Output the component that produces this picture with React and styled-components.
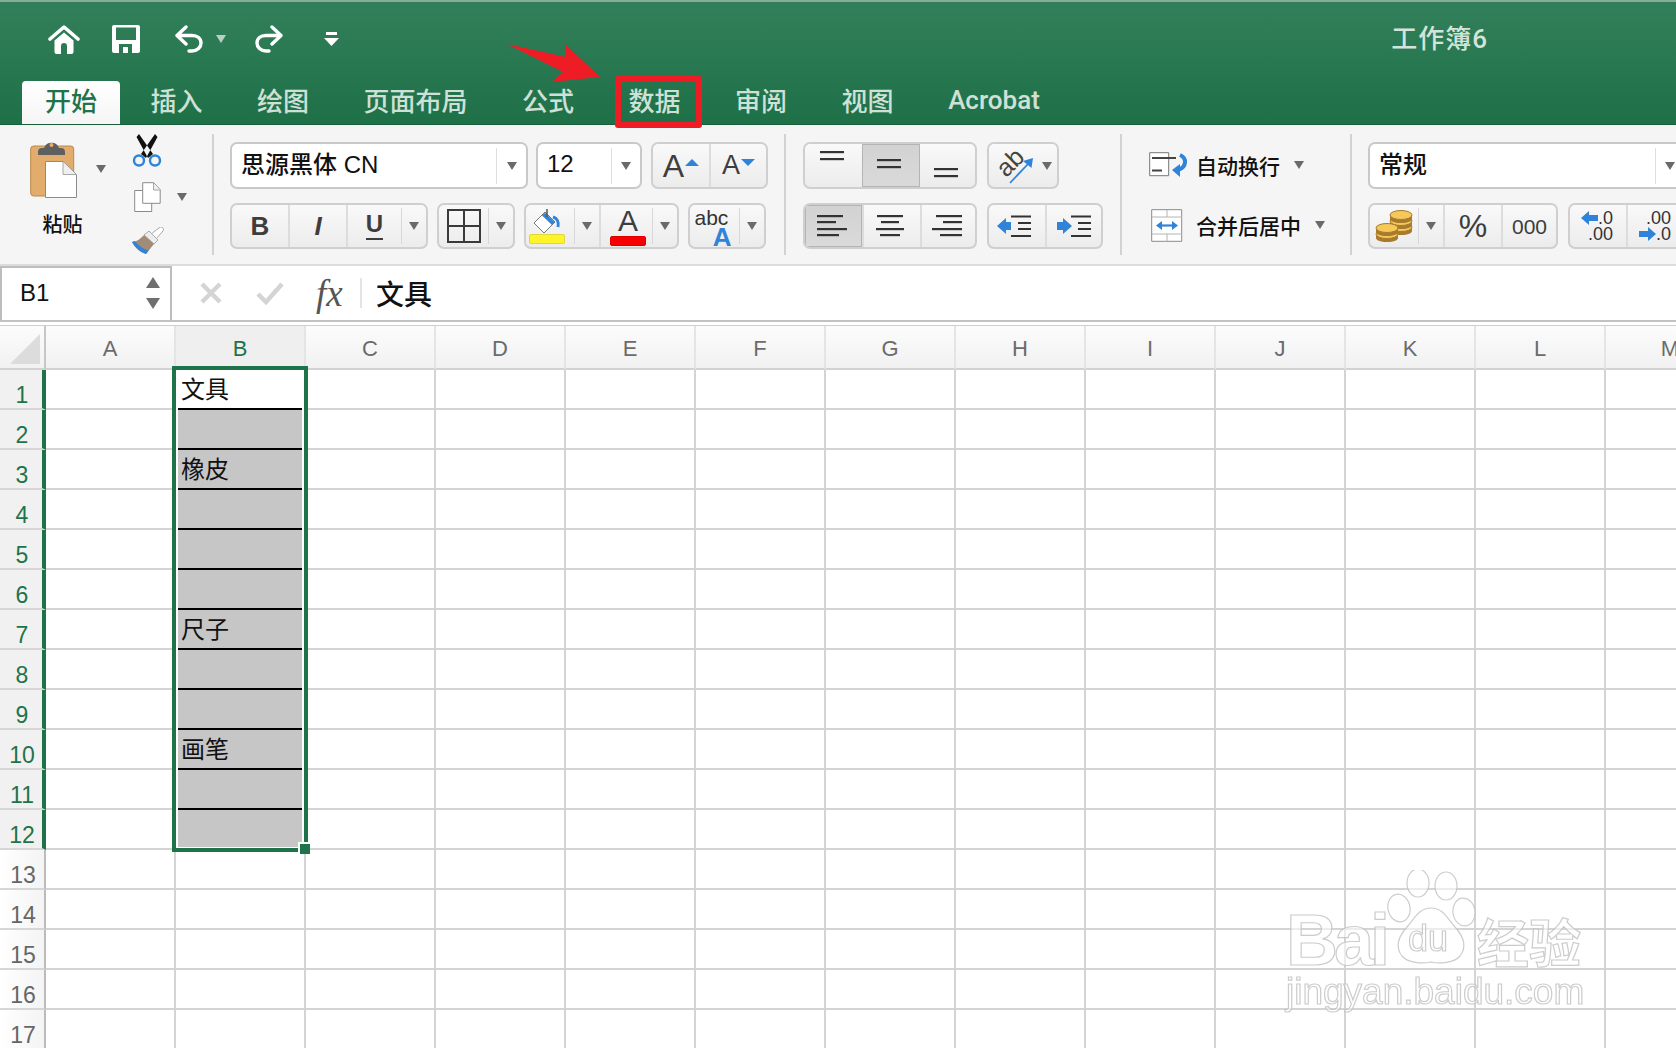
import styled, { createGlobalStyle } from "styled-components";

const SANS = `"Liberation Sans", "Noto Sans CJK SC", sans-serif`;
const UI = `Roboto, "Noto Sans CJK SC", sans-serif`;
const GREEN = "#1f7349";
const BLUE = "#2f83d9";

const GlobalStyle = createGlobalStyle`
  html, body {
    margin: 0;
    height: 100%;
    overflow: hidden;
    background: #fff;
    font-family: ${UI};
    font-weight: 500;
  }
`;

const Page = styled.div`
  position: relative;
  width: 1676px;
  height: 1048px;
  overflow: hidden;
  display: flex;
  flex-direction: column;
`;

// title bar

const TitleBar = styled.div`
  height: 125px;
  box-sizing: border-box;
  flex: none;
  display: flex;
  flex-direction: column;
  border-top: 2px solid #86ad98;
  border-bottom: 1px solid #1a5f3c;
  background: linear-gradient(#32805b, #1e7047);
`;

const QuickBar = styled.div`
  height: 80px;
  box-sizing: border-box;
  padding: 0 188px 6px 48px;
  display: flex;
  align-items: center;
`;

const QuickIcon = styled.svg`
  flex: none;
  display: block;
  margin-left: ${(p) => p.$gap || 0}px;
  transform: ${(p) => (p.$flip ? "scaleX(-1)" : "none")};
`;

const QuickCaret = styled.span`
  flex: none;
  width: 0;
  height: 0;
  margin-left: 12px;
  border-left: 5.5px solid transparent;
  border-right: 5.5px solid transparent;
  border-top: 8px solid #b9d1c3;
`;

const DocTitle = styled.div`
  margin: -6px 0 0 auto;
  font-size: 26px;
  letter-spacing: 1px;
  color: #d3e4da;
  white-space: nowrap;
`;

const TabRow = styled.div`
  height: 42px;
  padding-left: 22px;
  display: flex;
  align-items: flex-end;
  gap: 0.5px;
`;

const Tab = styled.div`
  height: 43px;
  box-sizing: border-box;
  padding: 0 ${(p) => (p.$active ? 23 : 27)}px 6px;
  margin-right: ${(p) => (p.$active ? 3 : 0)}px;
  display: flex;
  align-items: center;
  font-size: 26px;
  white-space: nowrap;
  color: ${(p) => (p.$active ? GREEN : "#cfe1d7")};
  background: ${(p) => (p.$active ? "linear-gradient(#fff, #f5f5f5)" : "transparent")};
  border-radius: 4px 4px 0 0;
`;

// ribbon

const Ribbon = styled.div`
  height: 141px;
  box-sizing: border-box;
  flex: none;
  padding: 9px 0;
  display: flex;
  background: #f5f5f5;
  border-bottom: 2px solid #dcdcdc;
`;

const Section = styled.div`
  width: ${(p) => p.$w}px;
  flex: none;
  box-sizing: border-box;
  padding: ${(p) => (p.$rows ? "8px 0 0 " : "0 0 0 ")}${(p) => p.$pad || 0}px;
  border-right: ${(p) => (p.$last ? "none" : "2px solid #d2d2d2")};
  display: flex;
  flex-direction: ${(p) => (p.$rows ? "column" : "row")};
  gap: ${(p) => (p.$rows ? 14 : 0)}px;
`;

const PasteCol = styled.div`
  width: 77px;
  padding-top: 6px;
  flex: none;
`;

const PasteTop = styled.div`
  display: flex;
  align-items: center;
  gap: 19px;
`;

const PasteLabel = styled.div`
  width: 65px;
  margin-top: 15px;
  text-align: center;
  font-size: 20px;
  line-height: 24px;
  color: #111;
`;

const ToolCol = styled.div`
  margin-left: 24px;
  display: flex;
  flex-direction: column;
  gap: 15px;
`;

const ToolRow = styled.div`
  display: flex;
  align-items: center;
  gap: 16px;
  padding-left: ${(p) => p.$indent || 0}px;
`;

const Row = styled.div`
  display: flex;
  gap: ${(p) => p.$gap || 9}px;
  height: ${(p) => p.$h || 46}px;
`;

const Caret = styled.span`
  flex: none;
  width: 0;
  height: 0;
  border-left: 5.5px solid transparent;
  border-right: 5.5px solid transparent;
  border-top: 8px solid #6a6a6a;
`;

const Combo = styled.div`
  width: ${(p) => p.$w}px;
  flex: none;
  box-sizing: border-box;
  display: flex;
  align-items: center;
  margin-left: ${(p) => p.$nudge || 0}px;
  background: #fff;
  border: 2px solid #c9c9c9;
  border-radius: 7px;
  font-family: ${SANS};
  font-size: 24px;
  color: #111;
`;

const ComboText = styled.span`
  flex: 1;
  padding-left: 9px;
  padding-bottom: ${(p) => p.$lift}px;
  white-space: nowrap;
`;

const ComboArrow = styled.div`
  width: ${(p) => p.$w}px;
  height: 36px;
  flex: none;
  display: flex;
  align-items: center;
  justify-content: center;
  border-left: 1px solid #dedede;
`;

const BtnGroup = styled.div`
  width: ${(p) => p.$w}px;
  flex: none;
  box-sizing: border-box;
  display: flex;
  overflow: hidden;
  margin-left: ${(p) => p.$nudge || 0}px;
  border: 2px solid #cfcfcf;
  border-radius: 7px;
  background: linear-gradient(#f9f9f9, #ececec);
`;

const Seg = styled.div`
  width: ${(p) => p.$w}px;
  flex: ${(p) => (p.$w ? "none" : 1)};
  box-sizing: border-box;
  padding: 0 ${(p) => p.$pr || 0}px 0 ${(p) => p.$pl || 0}px;
  display: flex;
  flex-direction: ${(p) => (p.$col ? "column" : "row")};
  align-items: center;
  justify-content: center;
  gap: ${(p) => p.$gap || 0}px;
  color: #3d3d3d;
  background: ${(p) => (p.$active ? "linear-gradient(#d2d2d2, #dadada)" : "transparent")};
  box-shadow: ${(p) => (p.$active ? "inset 0 0 0 1px #b4b4b4" : "none")};
  border-left: ${(p) => (p.$divided ? "2px solid #dcdcdc" : "none")};
`;

const SplitArrow = styled.div`
  width: ${(p) => p.$w || 24}px;
  flex: none;
  align-self: center;
  height: 36px;
  display: flex;
  align-items: center;
  justify-content: center;
  border-left: ${(p) => (p.$plain ? "none" : "1px solid #d8d8d8")};
`;

const Letter = styled.span`
  font-family: ${SANS};
  font-size: ${(p) => p.$size || 26}px;
  font-weight: ${(p) => (p.$bold ? 700 : 400)};
  font-style: ${(p) => (p.$italic ? "italic" : "normal")};
  color: #3d3d3d;
  line-height: 1;
`;

const UnderLetter = styled(Letter)`
  border-bottom: 2px solid #3d3d3d;
  padding-bottom: 2px;
`;

const Triangle = styled.span`
  width: 0;
  height: 0;
  margin-top: -6px;
  border-left: 7px solid transparent;
  border-right: 7px solid transparent;
  border-${(p) => (p.$down ? "top" : "bottom")}: 7px solid ${BLUE};
`;

const ColorBar = styled.span`
  width: 36px;
  height: 10px;
  border-radius: 2px;
  background: ${(p) => p.$color};
  border: 1px solid ${(p) => p.$edge};
  box-sizing: border-box;
`;

const AbcStack = styled.div`
  width: 40px;
  display: flex;
  flex-direction: column;
  padding-top: 2px;
`;

const AbcTop = styled.span`
  font-family: ${SANS};
  font-size: 21px;
  line-height: 20px;
  color: #333;
`;

const AbcA = styled.span`
  align-self: flex-end;
  margin-right: 3px;
  margin-top: -1px;
  font-family: ${SANS};
  font-size: 26px;
  font-weight: 700;
  line-height: 20px;
  color: ${BLUE};
`;

const WrapAction = styled.div`
  height: ${(p) => p.$h}px;
  box-sizing: border-box;
  padding: 0 0 2px ${(p) => p.$pad}px;
  display: flex;
  align-items: center;
  font-size: 21px;
  color: #111;
`;

const ActionText = styled.span`
  margin: 0 ${(p) => p.$after}px 0 ${(p) => p.$before}px;
  white-space: nowrap;
`;

const DecimalLine = styled.div`
  display: flex;
  align-items: center;
  justify-content: flex-end;
  width: 100%;
  padding-right: ${(p) => p.$pad || 0}px;
  box-sizing: border-box;
  font-family: ${SANS};
  font-size: 18px;
  line-height: 16px;
  color: #333;
`;

// formula bar

const FormulaBar = styled.div`
  height: 56px;
  flex: none;
  box-sizing: border-box;
  display: flex;
  background: #fff;
  border-bottom: 2px solid #c2c2c2;
`;

const NameBox = styled.div`
  width: 172px;
  flex: none;
  box-sizing: border-box;
  padding: 0 0 2px 18px;
  display: flex;
  align-items: center;
  justify-content: space-between;
  border: 2px solid #bdbdbd;
  border-bottom: none;
  font-family: ${SANS};
  font-size: 24px;
  color: #111;
`;

const Spinner = styled.div`
  display: flex;
  flex-direction: column;
  gap: 10px;
  margin-right: 10px;
`;

const SpinArrow = styled.span`
  width: 0;
  height: 0;
  border-left: 7px solid transparent;
  border-right: 7px solid transparent;
  border-${(p) => (p.$down ? "top" : "bottom")}: 11px solid #6f6f6f;
`;

const FormulaTools = styled.div`
  display: flex;
  align-items: center;
  padding-left: 27px;
`;

const ToolGap = styled.span`
  width: 32px;
`;

const FxMark = styled.span`
  margin-left: 31px;
  width: 44px;
  font-family: "Liberation Serif", serif;
  font-style: italic;
  font-size: 37px;
  color: #555;
`;

const FxDivider = styled.span`
  width: 2px;
  height: 30px;
  margin-right: 14px;
  background: #e4e4e4;
`;

const FormulaText = styled.div`
  font-size: 28px;
  color: #111;
`;

// sheet

const SheetWrap = styled.div`
  position: relative;
  flex: 1;
  overflow: hidden;
  background: #fff;
  padding-top: 3px;
`;

const Sheet = styled.div`
  display: grid;
  grid-template-columns: 46px repeat(13, 130px);
  grid-template-rows: 44px repeat(17, 40px);
  border-top: 1px solid #cfcfcf;
`;

const Corner = styled.div`
  position: relative;
  border-right: 2px solid #c6c6c6;
  border-bottom: 2px solid #d2d2d2;
  background: linear-gradient(#fcfcfc, #f1f1f1);
  &::after {
    content: "";
    position: absolute;
    right: 4px;
    bottom: 4px;
    width: 30px;
    height: 30px;
    background: #dcdcdc;
    clip-path: polygon(100% 0, 100% 100%, 0 100%);
  }
`;

const ColHead = styled.div`
  display: flex;
  align-items: center;
  justify-content: center;
  padding-top: 4px;
  font-family: ${SANS};
  font-weight: 400;
  font-size: 22px;
  color: ${(p) => (p.$active ? GREEN : "#6b6b6b")};
  background: ${(p) => (p.$active ? "#efefef" : "linear-gradient(#fcfcfc, #f1f1f1)")};
  border-right: 2px solid #e4e4e4;
  border-bottom: 2px solid #d2d2d2;
`;

const RowHead = styled.div`
  box-sizing: border-box;
  padding: 13px 0 0 2px;
  text-align: center;
  font-family: ${SANS};
  font-weight: 400;
  font-size: 23px;
  line-height: 24px;
  color: ${(p) => (p.$active ? GREEN : "#666")};
  background: ${(p) => (p.$active ? "#f1f1f1" : "linear-gradient(90deg, #fff, #f4f4f4)")};
  border-right: ${(p) => (p.$active ? `4px solid ${GREEN}` : "2px solid #bbb")};
  border-bottom: 2px solid #d6d6d6;
`;

const Cell = styled.div`
  box-sizing: border-box;
  border-right: 2px solid #d4d4d4;
  border-bottom: 2px solid #d4d4d4;
`;

const SelCell = styled.div`
  box-sizing: border-box;
  padding: 0 4px ${(p) => (p.$last ? 3 : 0)}px 2px;
  display: flex;
`;

const SelFill = styled.div`
  flex: 1;
  box-sizing: border-box;
  padding: 0 0 3px 3px;
  display: flex;
  align-items: center;
  font-size: 24px;
  font-weight: 400;
  color: #111;
  background: ${(p) => (p.$first ? "#fff" : "#c6c6c6")};
  border-bottom: ${(p) => (p.$last ? "none" : "2px solid #000")};
`;

const Selection = styled.div`
  position: absolute;
  left: 172px;
  top: 44px;
  width: 136px;
  height: 486px;
  box-sizing: border-box;
  border: 4px solid ${GREEN};
  pointer-events: none;
`;

const Handle = styled.span`
  position: absolute;
  right: -6px;
  bottom: -6px;
  width: 10px;
  height: 10px;
  background: ${GREEN};
  box-shadow: -2px -2px 0 #fff;
`;

// overlays

const RedBox = styled.div`
  position: absolute;
  left: 615px;
  top: 76px;
  width: 87px;
  height: 52px;
  box-sizing: border-box;
  border: 6px solid #ee1c25;
  border-radius: 3px;
`;

const RedArrow = styled.svg`
  position: absolute;
  left: 505px;
  top: 40px;
`;

const Watermark = styled.div`
  position: absolute;
  left: 1286px;
  top: 870px;
  width: 300px;
  filter: blur(0.4px);
  opacity: 0.85;
`;

const MarkTop = styled.div`
  display: flex;
  align-items: flex-end;
  height: 96px;
`;

const outlined = `
  color: rgba(255, 255, 255, 0.65);
  -webkit-text-stroke: 1.2px #c4c4c4;
  white-space: nowrap;
`;

const MarkBrand = styled.span`
  ${outlined}
  font-family: ${SANS};
  font-weight: 700;
  font-size: 72px;
  letter-spacing: -4px;
  line-height: 60px;
  height: 56px;
`;

const MarkPaw = styled.svg`
  flex: none;
`;

const MarkCjk = styled.span`
  ${outlined}
  margin-left: 1px;
  font-weight: 700;
  font-size: 52px;
  line-height: 60px;
  height: 50px;
`;

const MarkSite = styled.div`
  ${outlined}
  margin-top: 5px;
  font-family: ${SANS};
  font-weight: 400;
  font-size: 37px;
  line-height: 42px;
`;

function HomeIcon() {
  return (
    <QuickIcon width="32" height="30" viewBox="0 0 32 30">
      <path d="M2 15 16 3l14 12" fill="none" stroke="#fff" strokeWidth="3.6" strokeLinecap="round" strokeLinejoin="round" />
      <path d="M6.500 16.500 16 8.500l9.500 8V28a2 2 0 0 1-2 2H19V22a3 3 0 0 0-6 0v8H8.500a2 2 0 0 1-2-2z" fill="#fff" />
    </QuickIcon>
  );
}

function SaveIcon() {
  return (
    <QuickIcon $gap={32} width="28" height="28" viewBox="0 0 28 28">
      <path
        fillRule="evenodd"
        d="M2 0h24a2 2 0 0 1 2 2v24a2 2 0 0 1-2 2H2a2 2 0 0 1-2-2V2a2 2 0 0 1 2-2zM4 2.500V15h20V2.500zM7 19v9h13v-9zM11 22h5v6h-5z"
        fill="#fff"
      />
    </QuickIcon>
  );
}

function UndoIcon({ flip, gap }) {
  return (
    <QuickIcon $gap={gap} $flip={flip} width="30" height="28" viewBox="0 0 30 28">
      <path
        d="M12 2 3 10.500l9 8.500M3 10.500h15c5.500 0 9 3.200 9 7.500s-3.500 8-9 8h-3"
        fill="none"
        stroke="#fff"
        strokeWidth="3.4"
        strokeLinecap="round"
        strokeLinejoin="round"
      />
    </QuickIcon>
  );
}

function CustomizeIcon() {
  return (
    <QuickIcon $gap={40} width="15" height="14" viewBox="0 0 15 14">
      <rect x="2" y="0" width="11" height="3" fill="#fff" />
      <path d="M0 6h15l-7.500 8z" fill="#fff" />
    </QuickIcon>
  );
}

function PasteIcon() {
  return (
    <svg width="47" height="58" viewBox="0 0 47 58">
      <rect x="0.700" y="6" width="43" height="50" rx="3" fill="#e2ad6c" stroke="#b98a4a" />
      <path d="M8 15v-3a4 4 0 0 1 4-4h2a8 8 0 0 1 15 0h2a4 4 0 0 1 4 4v3z" fill="#5f5f5f" />
      <circle cx="21.500" cy="5" r="2" fill="#e2ad6c" />
      <path d="M15.500 21.500H33l13.500 13V57.500h-31z" fill="#fff" stroke="#8c8c8c" />
      <path d="M33 22v12.500h13" fill="#efefef" stroke="#a8a8a8" />
    </svg>
  );
}

function ScissorsIcon() {
  return (
    <svg width="30" height="33" viewBox="0 0 30 33">
      <path d="M7 0 21 20l-5 4L4.500 3zM23 0 9 20l5 4L25.500 3z" fill="#111" />
      <circle cx="7" cy="26.500" r="5" fill="none" stroke={BLUE} strokeWidth="2.400" />
      <circle cx="23" cy="26.500" r="5" fill="none" stroke={BLUE} strokeWidth="2.400" />
    </svg>
  );
}

function CopyIcon() {
  return (
    <svg width="27" height="30" viewBox="0 0 27 30">
      <path d="M.7 8.500h17v21H.7z" fill="#fff" stroke="#8a8a8a" />
      <path d="M8.700.7h11l6.500 7v13.600H8.700z" fill="#fff" stroke="#8a8a8a" />
      <path d="M19.500 1v7h6.500" fill="#efefef" stroke="#a8a8a8" />
    </svg>
  );
}

function BrushIcon() {
  return (
    <svg width="33" height="28" viewBox="0 0 33 28">
      <path d="M20 7 28 1a2.500 2.500 0 0 1 4 3l-7 8z" fill="#fff" stroke="#aaa" />
      <path d="M13 8 18 4l9 9-4 4z" fill="#ededed" stroke="#aaa" />
      <path d="M1 15c5 0 9-4 12-7l10 9c-3 3-5 7-8 10-6-2-11-6-14-12z" fill="#a08c78" />
      <path d="M1 15c3 5 8 10 14 12l2.500-3.500C12 22 7 18 3.800 14z" fill={BLUE} />
    </svg>
  );
}

function BorderIcon() {
  return (
    <svg width="34" height="34" viewBox="0 0 34 34">
      <path d="M1 1h32v32H1zM17 1v32M1 17h32" fill="none" stroke="#3a3a3a" strokeWidth="2" />
    </svg>
  );
}

function FillIcon() {
  return (
    <svg width="28" height="26" viewBox="0 0 28 26">
      <path d="M12 4 22 14 11 25 1 15z" fill="#fff" stroke="#777" />
      <path d="M9 7.500 19 17l2.500-3L12 4.700z" fill={BLUE} />
      <path d="M14 1v8" stroke="#555" strokeWidth="1.500" />
      <path d="M20 9c4 1 6 5 5 10" fill="none" stroke={BLUE} strokeWidth="3" />
    </svg>
  );
}

// horizontal strokes of the alignment buttons
function LinesIcon({ w, h, lines }) {
  return (
    <svg width={w} height={h} viewBox={`0 0 ${w} ${h}`}>
      {lines.map(([x, y, len], i) => (
        <rect key={i} x={x} y={y} width={len} height="2.200" fill="#333" />
      ))}
    </svg>
  );
}

function OrientIcon() {
  return (
    <svg width="38" height="38" viewBox="0 0 38 38">
      <text x="0" y="25" transform="rotate(-45 12 17)" fontFamily="Liberation Sans" fontSize="25" fill="#444">
        ab
      </text>
      <path d="M13 36 31 17" fill="none" stroke={BLUE} strokeWidth="1.800" />
      <path d="M36 11 34.500 21 26 14z" fill={BLUE} />
    </svg>
  );
}

function IndentIcon({ right }) {
  return (
    <svg width="34" height="24" viewBox="0 0 34 24">
      <path d={right ? "M0 8h6V4l9 8-9 8v-4H0z" : "M14 8H9V4l-9 8 9 8v-4h5z"} fill={BLUE} />
      <path d="M14 2.500h20M21 9h13M21 15h13M14 22h20" stroke="#333" strokeWidth="2.200" />
    </svg>
  );
}

function CoinStack({ x, y, n }) {
  const coins = Array.from({ length: n }, (_, i) => i);
  return coins.reverse().map((i) => (
    <g key={i} transform={`translate(${x} ${y + i * 6})`}>
      <path d="M0 4v4c0 2 4 4 11 4s11-2 11-4V4z" fill="#a87a2d" />
      <ellipse cx="11" cy="4" rx="11" ry="4.500" fill="#f4c95a" stroke="#a87a2d" />
    </g>
  ));
}

function CoinsIcon() {
  return (
    <svg width="38" height="32" viewBox="0 0 38 32">
      <CoinStack x={15} y={1} n={3} />
      <CoinStack x={1} y={14} n={2} />
    </svg>
  );
}

function WrapIcon() {
  return (
    <svg width="40" height="28" viewBox="0 0 40 28">
      <path d="M.7 1.700h19v23h-19z" fill="#fff" stroke="#777" />
      <path d="M3 7h24M3 19.500h10" stroke="#444" strokeWidth="1.800" />
      <path d="M31 4c7 3 7 12-2 15" fill="none" stroke={BLUE} strokeWidth="4" />
      <path d="M23 19l8-6v13z" fill={BLUE} />
    </svg>
  );
}

function MergeIcon() {
  return (
    <svg width="32" height="33" viewBox="0 0 32 33">
      <path d="M.7.7h30v31.600H.7z" fill="#fff" stroke="#8a8a8a" />
      <path d="M1 8h30M1 25h30M16 1v7M16 25v7" stroke="#b4b4b4" />
      <path d="M9 16.500h14" stroke={BLUE} strokeWidth="2.200" />
      <path d="M5 16.500 11 12v9zM27 16.500 21 12v9z" fill={BLUE} />
    </svg>
  );
}

function CrossIcon() {
  return (
    <svg width="24" height="24" viewBox="0 0 24 24">
      <path d="M3 3l18 18M21 3 3 21" stroke="#d4d4d4" strokeWidth="4.500" />
    </svg>
  );
}

function CheckIcon() {
  return (
    <svg width="30" height="24" viewBox="0 0 30 24">
      <path d="M3 13l8 8L27 3" fill="none" stroke="#d4d4d4" strokeWidth="4.500" />
    </svg>
  );
}

function DecArrow({ right }) {
  return (
    <svg width="17" height="14" viewBox="0 0 17 14">
      <path d={right ? "M0 4h9V0l8 7-8 7v-4H0z" : "M17 4H8V0L0 7l8 7v-4h9z"} fill={BLUE} />
    </svg>
  );
}

function PawMark() {
  const line = { fill: "rgba(255,255,255,.65)", stroke: "#c4c4c4", strokeWidth: 1.2 };
  return (
    <MarkPaw width="90" height="96" viewBox="0 0 90 96">
      <ellipse cx="32" cy="13" rx="11" ry="14" {...line} />
      <ellipse cx="60" cy="16" rx="11" ry="14" {...line} />
      <ellipse cx="13" cy="38" rx="11" ry="14" transform="rotate(-12 13 38)" {...line} />
      <ellipse cx="78" cy="42" rx="11" ry="14" transform="rotate(-8 78 42)" {...line} />
      <path d="M45 38c12 0 16 10 24 19 9 10 12 20 5 29-6 7-20 8-29 6-9 2-23 1-29-6-7-9-4-19 5-29 8-9 12-19 24-19z" {...line} />
      <text x="22" y="81" fontFamily="Liberation Sans" fontSize="36" fontWeight="400" {...line}>
        du
      </text>
    </MarkPaw>
  );
}

const COLS = "ABCDEFGHIJKLM".split("");
const ROWS = Array.from({ length: 17 }, (_, i) => i + 1);
const CELL_VALUES = { 1: "文具", 3: "橡皮", 7: "尺子", 10: "画笔" };
const TABS = ["开始", "插入", "绘图", "页面布局", "公式", "数据", "审阅", "视图", "Acrobat"];

function SheetRow({ row }) {
  const selected = row <= 12;
  return (
    <>
      <RowHead $active={selected}>{row}</RowHead>
      {COLS.map((col) =>
        col === "B" && selected ? (
          <SelCell key={col} $last={row === 12}>
            <SelFill $first={row === 1} $last={row === 12}>
              {CELL_VALUES[row]}
            </SelFill>
          </SelCell>
        ) : (
          <Cell key={col} />
        )
      )}
    </>
  );
}

function App() {
  return (
    <Page>
      <GlobalStyle />
      <TitleBar>
        <QuickBar>
          <HomeIcon />
          <SaveIcon />
          <UndoIcon gap={34} />
          <QuickCaret />
          <UndoIcon flip gap={28} />
          <CustomizeIcon />
          <DocTitle>工作簿6</DocTitle>
        </QuickBar>
        <TabRow>
          {TABS.map((tab, i) => (
            <Tab key={tab} $active={i === 0}>
              {tab}
            </Tab>
          ))}
        </TabRow>
      </TitleBar>

      <Ribbon>
        <Section $w={214} $pad={30}>
          <PasteCol>
            <PasteTop>
              <PasteIcon />
              <Caret />
            </PasteTop>
            <PasteLabel>粘贴</PasteLabel>
          </PasteCol>
          <ToolCol>
            <ToolRow $indent={1}>
              <ScissorsIcon />
            </ToolRow>
            <ToolRow $indent={3}>
              <CopyIcon />
              <Caret />
            </ToolRow>
            <ToolRow>
              <BrushIcon />
            </ToolRow>
          </ToolCol>
        </Section>

        <Section $w={572} $pad={16} $rows>
          <Row $h={47} $gap={8}>
            <Combo $w={298}>
              <ComboText $lift={6}>思源黑体 CN</ComboText>
              <ComboArrow $w={29}>
                <Caret />
              </ComboArrow>
            </Combo>
            <Combo $w={106}>
              <ComboText $lift={3}>12</ComboText>
              <ComboArrow $w={28}>
                <Caret />
              </ComboArrow>
            </Combo>
            <BtnGroup $w={117} $nudge={1}>
              <Seg $w={56} $gap={1}>
                <Letter $size={32}>A</Letter>
                <Triangle />
              </Seg>
              <Seg $divided $gap={1}>
                <Letter $size={27}>A</Letter>
                <Triangle $down />
              </Seg>
            </BtnGroup>
          </Row>
          <Row>
            <BtnGroup $w={198}>
              <Seg $w={56}>
                <Letter $bold>B</Letter>
              </Seg>
              <Seg $divided $w={58}>
                <Letter $bold $italic>
                  I
                </Letter>
              </Seg>
              <Seg $divided>
                <UnderLetter $bold $size={24}>
                  U
                </UnderLetter>
              </Seg>
              <SplitArrow>
                <Caret />
              </SplitArrow>
            </BtnGroup>
            <BtnGroup $w={78}>
              <Seg>
                <BorderIcon />
              </Seg>
              <SplitArrow>
                <Caret />
              </SplitArrow>
            </BtnGroup>
            <BtnGroup $w={155}>
              <Seg $w={48} $col $pr={6}>
                <FillIcon />
                <ColorBar $color="#fff32a" $edge="#e0d83a" />
              </Seg>
              <SplitArrow>
                <Caret />
              </SplitArrow>
              <Seg $col $divided $pl={3}>
                <Letter $size={30}>A</Letter>
                <ColorBar $color="#f80000" $edge="#e00000" />
              </Seg>
              <SplitArrow>
                <Caret />
              </SplitArrow>
            </BtnGroup>
            <BtnGroup $w={78}>
              <Seg>
                <AbcStack>
                  <AbcTop>abc</AbcTop>
                  <AbcA>A</AbcA>
                </AbcStack>
              </Seg>
              <SplitArrow>
                <Caret />
              </SplitArrow>
            </BtnGroup>
          </Row>
        </Section>

        <Section $w={336} $pad={17} $rows>
          <Row $h={47} $gap={10}>
            <BtnGroup $w={174}>
              <Seg $w={57} $pr={4}>
                <LinesIcon w={24} h={34} lines={[[0, 2, 24], [0, 9, 24]]} />
              </Seg>
              <Seg $w={58} $active $pr={4}>
                <LinesIcon w={24} h={34} lines={[[0, 10, 24], [0, 17, 24]]} />
              </Seg>
              <Seg $pr={4}>
                <LinesIcon w={24} h={34} lines={[[0, 19, 24], [0, 26, 24]]} />
              </Seg>
            </BtnGroup>
            <BtnGroup $w={72}>
              <Seg $pl={6}>
                <OrientIcon />
              </Seg>
              <SplitArrow $w={20} $plain>
                <Caret />
              </SplitArrow>
            </BtnGroup>
          </Row>
          <Row $gap={10}>
            <BtnGroup $w={174}>
              <Seg $w={57} $active $pr={3}>
                <LinesIcon w={30} h={22} lines={[[0, 0, 26], [0, 6, 19], [0, 13, 30], [0, 19, 22]]} />
              </Seg>
              <Seg $divided $w={58} $pr={4}>
                <LinesIcon w={28} h={22} lines={[[1, 0, 26], [5, 6, 18], [0, 13, 28], [4, 19, 20]]} />
              </Seg>
              <Seg $divided $pr={4}>
                <LinesIcon w={30} h={22} lines={[[4, 0, 26], [11, 6, 19], [0, 13, 30], [8, 19, 22]]} />
              </Seg>
            </BtnGroup>
            <BtnGroup $w={116}>
              <Seg $w={56} $pr={6}>
                <IndentIcon />
              </Seg>
              <Seg $divided $pr={1}>
                <IndentIcon right />
              </Seg>
            </BtnGroup>
          </Row>
        </Section>

        <Section $w={230} $rows>
          <WrapAction $h={47} $pad={27}>
            <WrapIcon />
            <ActionText $before={7} $after={14}>
              自动换行
            </ActionText>
            <Caret />
          </WrapAction>
          <WrapAction $h={46} $pad={29}>
            <MergeIcon />
            <ActionText $before={13} $after={14}>
              合并后居中
            </ActionText>
            <Caret />
          </WrapAction>
        </Section>

        <Section $w={324} $pad={16} $rows $last>
          <Row $h={47}>
            <Combo $w={318}>
              <ComboText $lift={6}>常规</ComboText>
              <ComboArrow $w={28}>
                <Caret />
              </ComboArrow>
            </Combo>
          </Row>
          <Row $gap={10}>
            <BtnGroup $w={190}>
              <Seg $w={48}>
                <CoinsIcon />
              </Seg>
              <SplitArrow>
                <Caret />
              </SplitArrow>
              <Seg $divided $w={58}>
                <Letter $size={32}>%</Letter>
              </Seg>
              <Seg $divided>
                <Letter $size={21}>000</Letter>
              </Seg>
            </BtnGroup>
            <BtnGroup $w={150}>
              <Seg $w={56} $col>
                <DecimalLine $pad={13}>
                  <DecArrow />
                  .0
                </DecimalLine>
                <DecimalLine $pad={13}>.00</DecimalLine>
              </Seg>
              <Seg $divided $w={74} $col>
                <DecimalLine $pad={29}>.00</DecimalLine>
                <DecimalLine $pad={29}>
                  <DecArrow right />
                  .0
                </DecimalLine>
              </Seg>
            </BtnGroup>
          </Row>
        </Section>
      </Ribbon>

      <FormulaBar>
        <NameBox>
          B1
          <Spinner>
            <SpinArrow />
            <SpinArrow $down />
          </Spinner>
        </NameBox>
        <FormulaTools>
          <CrossIcon />
          <ToolGap />
          <CheckIcon />
          <FxMark>fx</FxMark>
          <FxDivider />
          <FormulaText>文具</FormulaText>
        </FormulaTools>
      </FormulaBar>

      <SheetWrap>
        <Sheet>
          <Corner />
          {COLS.map((col) => (
            <ColHead key={col} $active={col === "B"}>
              {col}
            </ColHead>
          ))}
          {ROWS.map((row) => (
            <SheetRow key={row} row={row} />
          ))}
        </Sheet>
        <Selection>
          <Handle />
        </Selection>
      </SheetWrap>

      <RedArrow width="100" height="50" viewBox="0 0 100 50">
        <path d="M2 4 61 17 60 4 95 37 47 42 58 32z" fill="#ee1c25" />
      </RedArrow>
      <RedBox />

      <Watermark>
        <MarkTop>
          <MarkBrand>Bai</MarkBrand>
          <PawMark />
          <MarkCjk>经验</MarkCjk>
        </MarkTop>
        <MarkSite>jingyan.baidu.com</MarkSite>
      </Watermark>
    </Page>
  );
}

export default App;
